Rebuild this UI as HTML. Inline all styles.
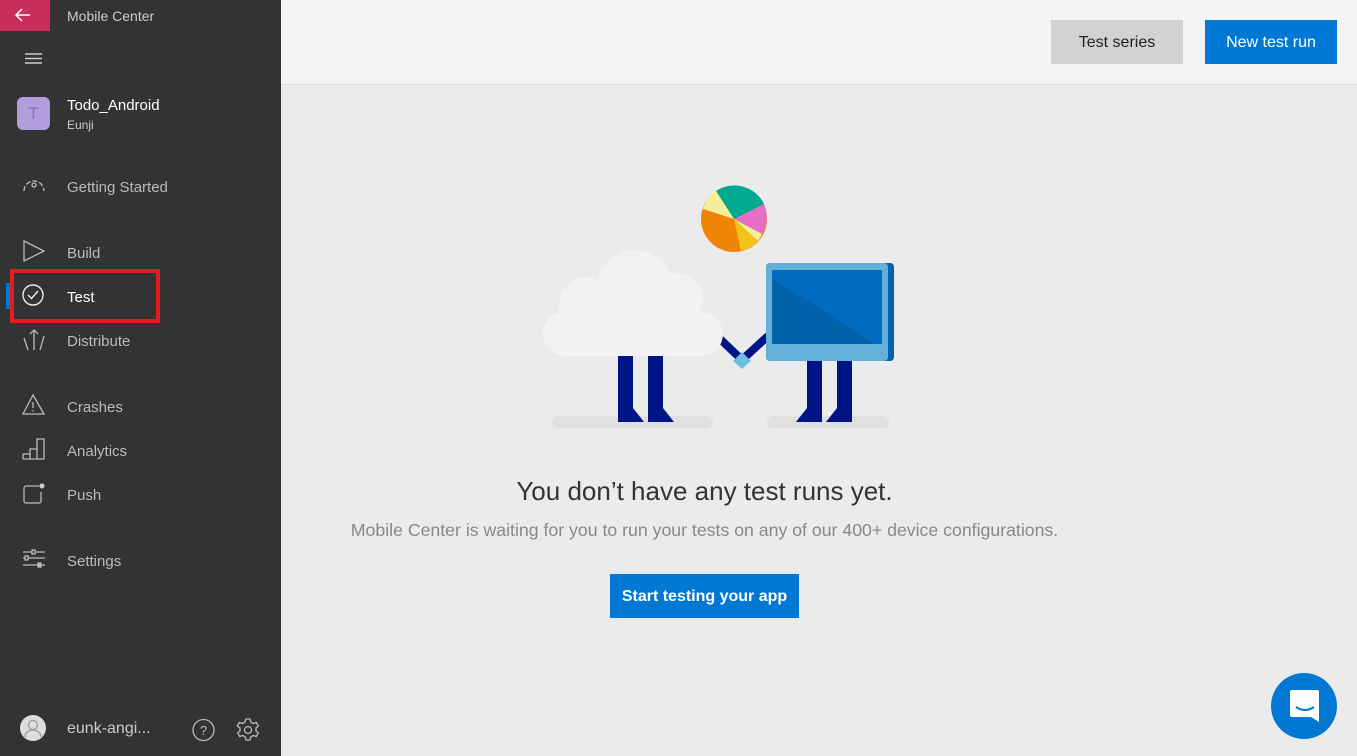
<!DOCTYPE html>
<html><head><meta charset="utf-8"><style>
*{margin:0;padding:0;box-sizing:border-box}
body{width:1357px;height:756px;overflow:hidden;font-family:"Segoe UI","Liberation Sans",sans-serif;background:#ebebeb;position:relative}
.sb{position:absolute;left:0;top:0;width:281px;height:756px;background:#333}
.t{position:absolute;color:#bbb;font-size:15px;white-space:nowrap}
.hdr{position:absolute;left:281px;top:0;width:1076px;height:85px;background:#f4f4f4;border-bottom:1px solid #ddd}
.btn{position:absolute;font-size:16px;display:flex;align-items:center;justify-content:center}
svg{position:absolute}
</style></head><body>
<div class="sb"></div>
<div style="position:absolute;left:0;top:0;width:50px;height:31px;background:#c92e5f"></div>
<svg style="left:0;top:0" width="50" height="31"><path d="M16 15h14M22 9l-6 6 6 6" stroke="#fff" stroke-width="1.5" fill="none"/></svg>
<div class="t" style="left:67px;top:8px;font-size:14px;color:#ccc">Mobile Center</div>
<svg style="left:24px;top:53px" width="20" height="12"><path d="M1 1h17M1 5.5h17M1 10h17" stroke="#ccc" stroke-width="1.5"/></svg>
<div style="position:absolute;left:17px;top:97px;width:33px;height:33px;border-radius:6px;background:#b19ddc;color:#8472c0;font-size:17px;text-align:center;line-height:33px">T</div>
<div class="t" style="left:67px;top:97px;color:#fff">Todo_Android</div>
<div class="t" style="left:67px;top:118px;font-size:12px;color:#ccc">Eunji</div>
<svg style="left:20px;top:172px" width="28" height="22" fill="none" stroke="#bbb" stroke-width="1.3"><path d="M4 19A10 10 0 1 1 24 19" stroke-dasharray="5 2"/><circle cx="14" cy="13" r="2"/></svg>
<div class="t" style="left:67px;top:179px">Getting Started</div>
<svg style="left:22px;top:239px" width="26" height="24" fill="none" stroke="#bbb" stroke-width="1.3"><path d="M2 2L22 12 2 22Z"/></svg>
<div class="t" style="left:67px;top:245px">Build</div>
<div style="position:absolute;left:6px;top:283px;width:4px;height:26px;background:#0078d7"></div>
<div style="position:absolute;left:10px;top:269px;width:150px;height:54px;border:4px solid #e51b24"></div>
<svg style="left:22px;top:284px" width="24" height="24" fill="none" stroke="#eee" stroke-width="1.4"><circle cx="11" cy="11" r="10"/><path d="M6 11l3.5 3.5L16 7"/></svg>
<div class="t" style="left:67px;top:289px;color:#fff">Test</div>
<svg style="left:21px;top:328px" width="26" height="24" fill="none" stroke="#bbb" stroke-width="1.3"><path d="M13 2v20M9 6l4-4 4 4M3 10l4 12M23 8l-4 14"/></svg>
<div class="t" style="left:67px;top:333px">Distribute</div>
<svg style="left:22px;top:393px" width="24" height="24" fill="none" stroke="#bbb" stroke-width="1.3"><path d="M11 2L1 21h21Z M11 9v6M11 17v1.5"/></svg>
<div class="t" style="left:67px;top:399px">Crashes</div>
<svg style="left:22px;top:437px" width="24" height="24" fill="none" stroke="#bbb" stroke-width="1.3"><path d="M1 22h21V2h-7v20M8 22V12h7M1 22v-5h7"/></svg>
<div class="t" style="left:67px;top:443px">Analytics</div>
<svg style="left:22px;top:482px" width="24" height="24" fill="none" stroke="#bbb" stroke-width="1.3"><path d="M17 4H4a2 2 0 0 0-2 2v13a2 2 0 0 0 2 2h13a2 2 0 0 0 2-2V10"/><circle cx="20" cy="4" r="2.5" fill="#ccc" stroke="none"/></svg>
<div class="t" style="left:67px;top:487px">Push</div>
<svg style="left:22px;top:549px" width="24" height="20" fill="none" stroke="#bbb" stroke-width="1.3"><path d="M1 3h22M1 9h22M1 16h22"/><rect x="10" y="1" width="3" height="4" fill="#333"/><rect x="3" y="7" width="3" height="4" fill="#333"/><rect x="16" y="14" width="3" height="4" fill="#bbb"/></svg>
<div class="t" style="left:67px;top:553px">Settings</div>
<svg style="left:20px;top:715px" width="28" height="28"><circle cx="13" cy="13" r="13" fill="#ddd"/><circle cx="13" cy="10" r="4.5" fill="none" stroke="#999" stroke-width="1.3"/><path d="M5 22a8 7 0 0 1 16 0" fill="none" stroke="#999" stroke-width="1.3"/></svg>
<div class="t" style="left:67px;top:720px;font-size:16px;color:#ccc">eunk-angi...</div>
<svg style="left:192px;top:718px" width="24" height="24" fill="none" stroke="#bbb" stroke-width="1.3"><circle cx="11.5" cy="12" r="10.5"/><text x="11.5" y="17" font-size="13" fill="#bbb" stroke="none" text-anchor="middle" font-family="Liberation Sans">?</text></svg>
<svg style="left:236px;top:718px" width="24" height="24" fill="none" stroke="#bbb" stroke-width="1.3"><circle cx="12" cy="12" r="3.5"/><path d="M10 1h4l.7 3 2.6 1.5 3-1 2 3.5-2.3 2v3l2.3 2-2 3.5-3-1-2.6 1.5-.7 3h-4l-.7-3-2.6-1.5-3 1-2-3.5 2.3-2v-3L1.3 8l2-3.5 3 1L8.9 4z"/></svg>

<div class="hdr"></div>
<div class="btn" style="left:1051px;top:20px;width:132px;height:44px;background:#d2d2d2;color:#222;padding-top:2px">Test series</div>
<div class="btn" style="left:1205px;top:20px;width:132px;height:44px;background:#0078d4;color:#fff;padding-top:2px">New test run</div>

<svg style="left:520px;top:170px" width="390" height="270">
<rect x="32" y="246" width="161" height="12" rx="6" fill="#e0e0e0"/>
<rect x="247" y="246" width="122" height="12" rx="6" fill="#e0e0e0"/>
<g transform="translate(214,49)">
<circle r="33" fill="#f08505"/>
<path d="M0 0L-18-28A33 33 0 0 1 30-15Z" fill="#00a98f"/>
<path d="M0 0L30-15A33 33 0 0 1 28 15Z" fill="#e76ec7"/>
<path d="M0 0L28 15A33 33 0 0 1 24 22Z" fill="#f4ef9a"/>
<path d="M0 0L24 22A33 33 0 0 1 7 32Z" fill="#f0c419"/>
<path d="M0 0L-31-10A33 33 0 0 1-18-28Z" fill="#f4ef9a"/>
</g>
<path d="M198 167l22 21 M224 188l24-22" stroke="#001585" stroke-width="8" fill="none"/>
<path d="M222 182l9 9-9 8-9-8z" fill="#6dbde4"/>
<path d="M98 182h15v70h-15z M128 182h15v70h-15z" fill="#001585"/>
<path d="M113 238l11 14h-11z M143 238l11 14h-11z" fill="#001585"/>
<path d="M287 190h15v62h-15z M317 190h15v62h-15z" fill="#001585"/>
<path d="M287 238l-11 14h11z M317 238l-11 14h11z" fill="#001585"/>
<g fill="#f2f2f2">
<circle cx="67" cy="135" r="28"/><circle cx="115" cy="118" r="38"/><circle cx="158" cy="128" r="25"/>
<circle cx="181" cy="164" r="22"/><circle cx="45" cy="164" r="22"/>
<rect x="45" y="142" width="136" height="44"/>
</g>
<rect x="246" y="93" width="128" height="98" rx="4" fill="#0063b1"/>
<rect x="246" y="93" width="122" height="98" rx="4" fill="#63b0d8"/>
<rect x="252" y="100" width="110" height="74" fill="#006cbf"/>
<path d="M252 108L355 174H252z" fill="#0062a8"/>
</svg>

<div class="t" style="left:0;width:1409px;text-align:center;top:476px;font-size:26px;color:#333">You don’t have any test runs yet.</div>
<div class="t" style="left:0;width:1409px;text-align:center;top:520px;font-size:17.7px;color:#888">Mobile Center is waiting for you to run your tests on any of our 400+ device configurations.</div>
<div class="btn" style="left:610px;top:574px;width:189px;height:44px;background:#0078d4;color:#fff;font-weight:bold;padding-top:2px">Start testing your app</div>

<div style="position:absolute;left:1271px;top:673px;width:66px;height:66px;border-radius:50%;background:#0078d4"></div>
<svg style="left:1289px;top:689px" width="32" height="34"><path d="M3 1h25a2 2 0 0 1 2 2v30l-8-5H3a2 2 0 0 1-2-2V3a2 2 0 0 1 2-2z" fill="#fff"/><path d="M7 18q9 6 18 0" stroke="#0078d4" stroke-width="2" fill="none"/></svg>
</body></html>
